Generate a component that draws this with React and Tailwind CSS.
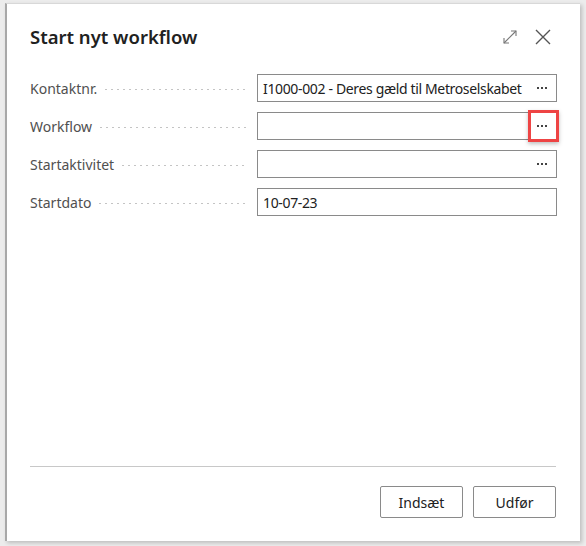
import React from 'react';

const fields = [
  { label: 'Kontaktnr.', value: 'I1000-002 - Deres gæld til Metroselskabet', lookup: true },
  { label: 'Workflow', value: '', lookup: true, highlight: true },
  { label: 'Startaktivitet', value: '', lookup: true },
  { label: 'Startdato', value: '10-07-23', lookup: false },
];

function Dots() {
  return (
    <span className="flex items-center gap-[2px]">
      <span className="w-[2px] h-[2px] bg-[#444]" />
      <span className="w-[2px] h-[2px] bg-[#444]" />
      <span className="w-[2px] h-[2px] bg-[#444]" />
    </span>
  );
}

function FieldRow({ field }) {
  return (
    <div className="flex items-center h-[28px]">
      <div className="flex items-center w-[227px] pr-[9px] text-[14px] text-[#505050]">
        <span className="whitespace-nowrap">{field.label}</span>
        <span className="flex-1 ml-[6px] mt-[3px] h-[3px] bg-[radial-gradient(circle,#c4c4c4_0.9px,transparent_1.1px)] bg-[length:6px_3px] bg-repeat-x" />
      </div>
      <div className="relative flex items-center w-[300px] h-[28px] border border-[#8a8a8a] bg-white">
        <span className="flex-1 pl-[5px] pr-[4px] text-[14px] tracking-[-0.35px] text-[#212121] whitespace-nowrap overflow-hidden">
          {field.value}
        </span>
        {field.lookup && (
          <span className="w-[28px] flex justify-center shrink-0">
            <Dots />
          </span>
        )}
        {field.highlight && (
          <span className="absolute right-[-3px] top-[-3px] w-[31px] h-[32px] border-[3px] border-[#ee4444] shadow-[0_2px_4px_rgba(0,0,0,0.25)]" />
        )}
      </div>
    </div>
  );
}

export default function App() {
  return (
    <div
      className="w-[586px] h-[546px] bg-[#ececec] pl-[5px] pt-[3px]"
      style={{ fontFamily: '"Segoe UI", "Noto Sans", "Open Sans", sans-serif' }}
    >
      <div className="w-[575px] h-[538px] bg-white border-l-2 border-[#a8a8a8] border-t border-t-[#d8d8d8] shadow-[2px_2px_4px_rgba(0,0,0,0.2)] flex flex-col px-[23px]">
        <div className="flex items-center justify-between h-[64px] pt-[2px]">
          <h1 className="text-[18.5px] font-semibold text-[#212121]">Start nyt workflow</h1>
          <div className="flex items-center gap-[16px] pr-[5px]">
            <svg width="16" height="16" viewBox="0 0 16 16" fill="none" stroke="#777" strokeWidth="1.1">
              <path d="M2 14 L14 2" />
              <path d="M9 2 H14 V7" />
              <path d="M2 9 V14 H7" />
            </svg>
            <svg width="18" height="18" viewBox="0 0 18 18" fill="none" stroke="#555" strokeWidth="1.4">
              <path d="M2 2 L16 16 M16 2 L2 16" />
            </svg>
          </div>
        </div>
        <div className="flex flex-col gap-[10px] mt-[6px]">
          {fields.map((f) => (
            <FieldRow key={f.label} field={f} />
          ))}
        </div>
        <div className="flex-1" />
        <div className="border-t border-[#c8c8c8] mr-[1px]" />
        <div className="flex justify-end gap-[10px] pt-[19px] pb-[23px] mr-[1px]">
          <button className="w-[83px] h-[32px] border border-[#8a8a8a] rounded-[2px] text-[14px] text-[#212121] bg-white">
            Indsæt
          </button>
          <button className="w-[83px] h-[32px] border border-[#8a8a8a] rounded-[2px] text-[14px] text-[#212121] bg-white">
            Udfør
          </button>
        </div>
      </div>
    </div>
  );
}
